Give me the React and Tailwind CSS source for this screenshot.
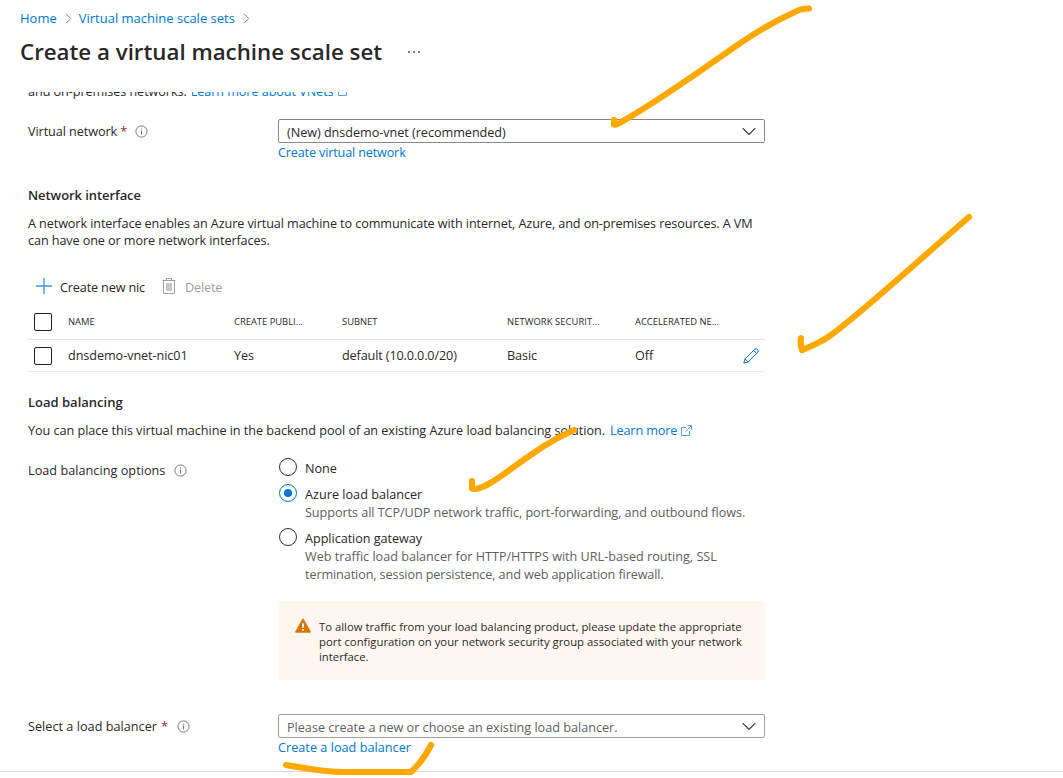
import React from "react";

const link = "text-[#0078d4]";

function InfoIcon({ className = "" }) {
  return (
    <svg className={`h-[13px] w-[13px] shrink-0 ${className}`} viewBox="0 0 13 13" fill="none">
      <circle cx="6.5" cy="6.5" r="5.6" stroke="#7a7978" strokeWidth="1" />
      <path d="M6.5 5.6V9.6M6.5 3.4V4.6" stroke="#7a7978" strokeWidth="1.1" />
    </svg>
  );
}

function ExternalIcon({ className = "" }) {
  return (
    <svg className={`h-[11px] w-[11px] shrink-0 ${className}`} viewBox="0 0 11 11" fill="none" stroke="#5a9be6">
      <path d="M5 2.5H.5v8h8V6M6.5.5h4v4M10.3.7L4.5 6.5" strokeWidth="1" />
    </svg>
  );
}

function Crumb({ className = "" }) {
  return (
    <svg className={`h-[11px] w-[7px] ${className}`} viewBox="0 0 7 11" fill="none">
      <path d="M1 .8L5.7 5.5L1 10.2" stroke="#86847f" strokeWidth="1" />
    </svg>
  );
}

function Select({ children, className = "" }) {
  return (
    <div className={`flex h-6 w-[487px] justify-between rounded-[2px] border pl-2 pr-2 ${className}`}>
      <span className="mt-[3px]">{children}</span>
      <svg className="mt-[7px] h-[9px] w-[14px]" viewBox="0 0 14 9" fill="none">
        <path d="M.7 1.2L7 7.5L13.3 1.2" stroke="#323130" strokeWidth="1.1" />
      </svg>
    </div>
  );
}

function Checkbox({ className = "" }) {
  return <span className={`ml-1.5 block h-[18px] w-[18px] rounded-[2px] border border-[#201f1e] ${className}`} />;
}

function Radio({ checked }) {
  return (
    <span
      className={`-mt-px mr-2 flex h-[18px] w-[18px] shrink-0 items-center justify-center rounded-full border ${
        checked ? "border-[#0078d4]" : "border-[#323130]"
      }`}
    >
      {checked && <span className="h-2 w-2 rounded-full bg-[#0078d4]" />}
    </span>
  );
}

const columns = "grid grid-cols-[40px_166px_108px_165px_128px_107px_23px]";

export default function App() {
  return (
    <div className="relative flex h-[778px] w-[1063px] flex-col overflow-hidden whitespace-nowrap bg-white font-['Open_Sans','Noto_Sans',sans-serif] text-[12.65px] leading-[18px] tracking-[-0.07px] text-[#292827]">
      <nav className={`flex items-center pl-5 pt-[9px] text-[13px] tracking-normal ${link}`}>
        <span>Home</span>
        <Crumb className="ml-2 mr-[7px]" />
        <span>Virtual machine scale sets</span>
        <Crumb className="ml-2" />
      </nav>
      <header className="mt-[9px] flex items-center pl-5 tracking-normal">
        <h1 className="w-[388px] text-[22.3px] font-semibold leading-8">Create a virtual machine scale set</h1>
        <span className="flex gap-[3px]">
          <i className="h-0.5 w-0.5 bg-[#8a8886]" />
          <i className="h-0.5 w-0.5 bg-[#8a8886]" />
          <i className="h-0.5 w-0.5 bg-[#8a8886]" />
        </span>
      </header>

      <main className="mt-6 h-[679px] w-[765px] overflow-hidden pl-7">
        <div className="-mt-2.5 flex">
          <span>and on-premises networks.</span>
          <span className={`ml-1 ${link}`}>Learn more about VNets</span>
          <ExternalIcon className="ml-1 mt-[3px]" />
        </div>

        <div className="mt-[19px] flex">
          <div className="mt-[3px] flex w-[250px]">
            <span>Virtual network</span>
            <span className="ml-[3px] text-[#a4262c]">*</span>
            <InfoIcon className="ml-2 mt-[3px]" />
          </div>
          <div>
            <Select className="border-[#8a8886] tracking-[-0.04px]">(New) dnsdemo-vnet (recommended)</Select>
            <div className={`tracking-[-0.16px] ${link}`}>Create virtual network</div>
          </div>
        </div>

        <h2 className="mt-[25px] text-[13px] font-semibold">Network interface</h2>
        <p className="mt-[11px] leading-[17px] tracking-[-0.098px]">
          A network interface enables an Azure virtual machine to communicate with internet, Azure, and on-premises resources. A VM
          <br />
          can have one or more network interfaces.
        </p>

        <div className="mt-[29px] flex">
          <svg className="ml-2 h-4 w-4" viewBox="0 0 16 16">
            <path d="M8 0V16M0 8H16" stroke="#3a95de" strokeWidth="1.3" />
          </svg>
          <span className="ml-2 w-[102px] tracking-[-0.15px]">Create new nic</span>
          <svg className="h-4 w-[14px]" viewBox="0 0 14 16" fill="none">
            <path d="M.5 2.5H13.5M4.5 2.5V.5H9.5V2.5M1.5 2.5V15.5H12.5V2.5" stroke="#a19f9d" />
            <path d="M4 5h6v8H4z" fill="#c8c6c4" />
          </svg>
          <span className="ml-[9px] tracking-[-0.15px] text-[#a19f9d]">Delete</span>
        </div>

        <div className="mt-2">
          <div className={`${columns} h-9 border-b border-[#e6e5e4] pt-[11px] text-[9.4px] leading-[14px] tracking-normal`}>
            <Checkbox className="-mt-0.5" />
            <span>NAME</span>
            <span>CREATE PUBLI...</span>
            <span>SUBNET</span>
            <span className="tracking-[0.08px]">NETWORK SECURIT...</span>
            <span>ACCELERATED NE...</span>
          </div>
          <div className={`${columns} h-8 border-b border-[#edebe9] pt-1.5`}>
            <Checkbox className="mt-px" />
            <span>dnsdemo-vnet-nic01</span>
            <span>Yes</span>
            <span className="tracking-[-0.13px]">default (10.0.0.0/20)</span>
            <span>Basic</span>
            <span>Off</span>
            <svg className="ml-px mt-0.5 h-4 w-4" viewBox="0 0 16 16" fill="none" stroke="#0078d4">
              <path d="M.8 15.2L2 10.8L11.8 1.2Q13.2.2 14.6 1.4Q15.8 2.8 14.8 4.2L5.2 14ZM2 10.8L5.2 14M10.6 2.4L13.6 5.4" />
            </svg>
          </div>
        </div>

        <h2 className="mt-[21px] text-[13px] font-semibold tracking-normal">Load balancing</h2>
        <div className="mt-2.5 flex">
          <span className="w-[582px] tracking-[-0.045px]">You can place this virtual machine in the backend pool of an existing Azure load balancing solution.</span>
          <span className={`w-[71px] tracking-[-0.12px] ${link}`}>Learn more</span>
          <ExternalIcon className="mt-1" />
        </div>

        <div className="mt-5 flex">
          <div className="mt-0.5 flex w-[251px]">
            <span className="tracking-[0.04px]">Load balancing options</span>
            <InfoIcon className="ml-[9px] mt-[3px]" />
          </div>
          <div>
            <div className="flex"><Radio /><span>None</span></div>
            <div className="mt-2 flex">
              <Radio checked />
              <div>
                <div className="tracking-[0.01px]">Azure load balancer</div>
                <div className="tracking-[-0.06px] text-[#605e5c]">Supports all TCP/UDP network traffic, port-forwarding, and outbound flows.</div>
              </div>
            </div>
            <div className="mt-2 flex">
              <Radio />
              <div>
                <div className="tracking-[-0.04px]">Application gateway</div>
                <div className="tracking-[-0.01px] text-[#605e5c]">
                  Web traffic load balancer for HTTP/HTTPS with URL-based routing, SSL
                </div>
                <div className="tracking-[-0.11px] text-[#605e5c]">
                  termination, session persistence, and web application firewall.
                </div>
              </div>
            </div>
          </div>
        </div>

        <div className="ml-[250px] mt-[18px] flex h-[79px] rounded-[2px] bg-[#fff8f1] pl-[17px] pt-[18px] text-[11.3px] leading-[15px] tracking-normal">
          <svg className="-mt-px h-4 w-4 shrink-0" viewBox="0 0 16 16">
            <path d="M8 1.3L15 14H1Z" fill="#db7500" stroke="#db7500" strokeWidth="1.6" strokeLinejoin="round" />
            <path d="M8 5.2V9.8M8 11V12.8" stroke="#fff" strokeWidth="1.7" />
          </svg>
          <p className="ml-2">
            To allow traffic from your load balancing product, please update the appropriate
            <br />
            <span className="tracking-[0.02px]">port configuration on your network security group associated with your network</span>
            <br />
            interface.
          </p>
        </div>

        <div className="mt-[34px] flex">
          <div className="mt-[3px] flex w-[250px]">
            <span className="tracking-[0.03px]">Select a load balancer</span>
            <span className="ml-1 text-[#a4262c]">*</span>
            <InfoIcon className="ml-[9px] mt-[3px]" />
          </div>
          <div>
            <Select className="border-[#a19f9d] tracking-[-0.01px] text-[#605e5c]">Please create a new or choose an existing load balancer.</Select>
            <div className={`tracking-[0.03px] ${link}`}>Create a load balancer</div>
          </div>
        </div>
      </main>
      <footer className="h-[7px] border-t border-[#d9d8d6]" />

      <svg
        className="pointer-events-none absolute inset-0 h-[778px] w-[1063px]"
        viewBox="0 0 1063 778"
        fill="none"
        stroke="#ffa800"
        strokeWidth="6.2"
        strokeLinecap="round"
        strokeLinejoin="round"
      >
        <path d="M614 120V124.5Q617 125 622 121.5C665 97 705 67 742 42Q768 24 798 10.5Q801 9 809 8.5" />
        <path d="M801 338Q800 345 802 350Q820 343 831 335C860 314 910 268 969 217" />
        <path d="M472 481V488.500Q477 491 492 482C520 464 540 445 574 430" />
        <path d="M286 765Q325 772 342 772H411Q423 761 431 745" />
      </svg>
    </div>
  );
}
